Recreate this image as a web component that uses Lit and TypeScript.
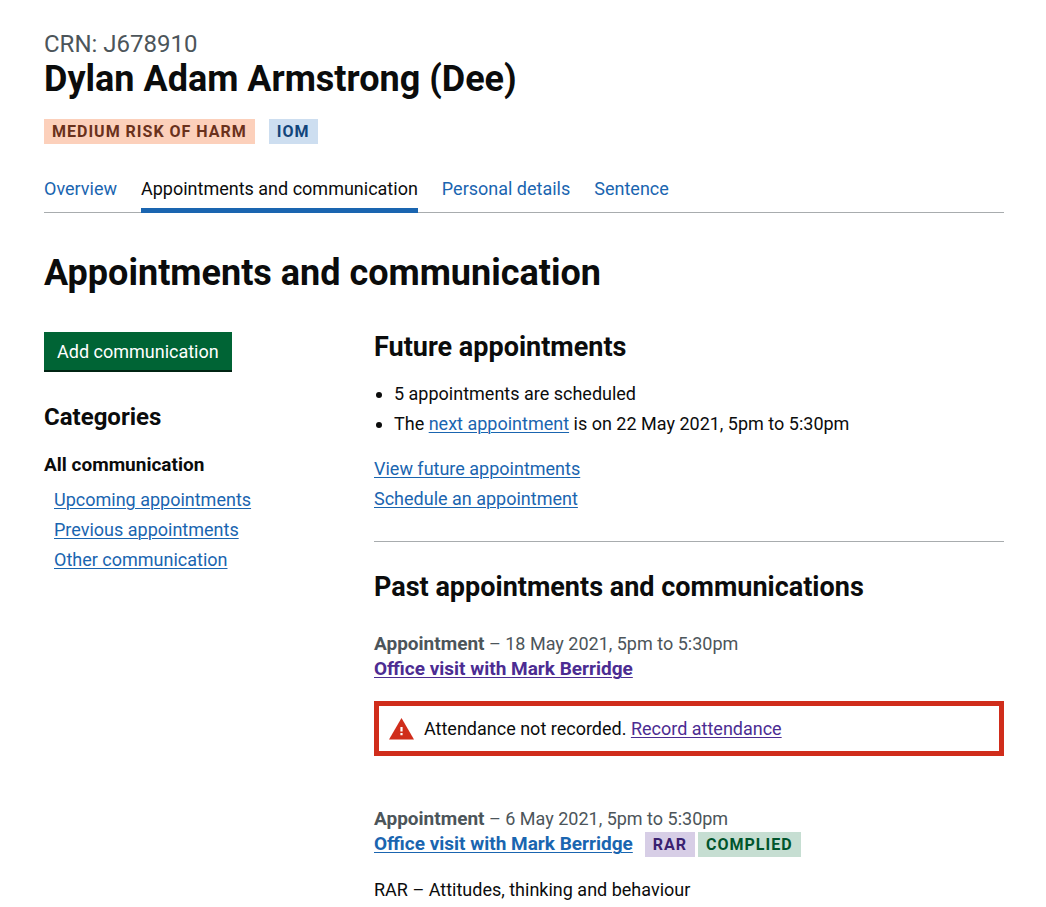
import { LitElement, html, css } from "lit";
import { customElement } from "lit/decorators.js";

@customElement("app-tag")
class AppTag extends LitElement {
  static properties = { colour: { type: String } };
  declare colour: string;

  static styles = css`
    :host { display: inline-block; }
    .tag {
      display: block;
      padding: 0 8px;
      font-size: 16px;
      line-height: 25px;
      font-weight: 700;
      letter-spacing: 1px;
      text-transform: uppercase;
    }
    .orange { background: #fcd0bb; color: #6a311c; }
    .blue { background: #cddef0; color: #12457b; }
    .purple { background: #d7cee6; color: #3a2270; }
    .green { background: #c6ded2; color: #00552c; }
  `;

  render() {
    return html`<strong class="tag ${this.colour}"><slot></slot></strong>`;
  }
}

@customElement("app-root")
class AppRoot extends LitElement {
  static styles = css`
    :host {
      display: block;
      font-family: Roboto, Arial, sans-serif;
      font-size: 18px;
      line-height: 25px;
      color: #0b0c0c;
      background: #fff;
    }
    * { box-sizing: border-box; }
    h1, h2, h3, p, ul { margin: 0; padding: 0; }
    ul { list-style: none; }
    a { color: #1a65b0; text-decoration-thickness: 1px; text-underline-offset: 2px; }
    .page { padding: 29px 42px 0 44px; }
    .crn { font-size: 24px; line-height: 30px; color: #4c555a; }
    .xl { font-size: 36px; line-height: 40px; }
    .tags { display: flex; gap: 14px; margin: 20px 0 32px; }
    .tabs { display: flex; gap: 24px; box-shadow: inset 0 -1px #a8acae; }
    .tab { display: block; padding-bottom: 7px; border-bottom: 5px solid transparent; text-decoration: none; }
    .tab.active { color: #0b0c0c; border-color: #1a65b0; }
    .title { margin: 40px 0 39px; }
    .columns { display: grid; grid-template-columns: 10fr 21fr; gap: 30px; align-items: start; }
    .button {
      display: block;
      padding: 7px 13px 6px;
      margin: 0 0 32px;
      border: 0;
      background: #006435;
      box-shadow: 0 2px #002413;
      color: #fff;
      font: inherit;
      cursor: pointer;
    }
    .medium { font-size: 24px; line-height: 30px; }
    .large { font-size: 27px; line-height: 30px; }
    .bold { font-size: 19px; font-weight: 700; }
    .current { margin-top: 20px; }
    .stack { display: grid; gap: 5px; justify-items: start; }
    .filters { margin-top: 10px; padding-left: 10px; }
    .bullets { list-style: disc; padding-left: 20px; margin: 19px 0 20px; }
    .bullets li + li { margin-top: 5px; }
    .past { margin-top: 30px; padding-top: 30px; border-top: 1px solid #a8acae; }
    .entry { margin-top: 29px; }
    .entry + .entry { margin-top: 50px; }
    .caption { color: #4c555a; }
    .heading { display: flex; flex-wrap: wrap; column-gap: 12px; }
    .labels { display: flex; gap: 3px; padding-top: 1px; }
    .visited { color: #4c2c92; }
    .alert {
      display: flex;
      align-items: center;
      gap: 10px;
      margin-top: 20px;
      padding: 10px;
      border: 5px solid #d02d1b;
    }
    .icon { flex: none; width: 25px; height: 22px; }
    .note { margin-top: 20px; }
  `;

  render() {
    return html`
      <div class="page">
        <header>
          <p class="crn">CRN: J678910</p>
          <h1 class="xl">Dylan Adam Armstrong (Dee)</h1>
          <div class="tags">
            <app-tag colour="orange">Medium risk of harm</app-tag>
            <app-tag colour="blue">IOM</app-tag>
          </div>
          <nav class="tabs" aria-label="Case">
            <a class="tab" href="#overview">Overview</a>
            <a class="tab active" href="#appointments" aria-current="page">Appointments and communication</a>
            <a class="tab" href="#personal">Personal details</a>
            <a class="tab" href="#sentence">Sentence</a>
          </nav>
        </header>
        <main>
          <h2 class="xl title">Appointments and communication</h2>
          <div class="columns">
            <div>
              <button class="button" type="button">Add communication</button>
              <h3 class="medium">Categories</h3>
              <p class="bold current">All communication</p>
              <ul class="stack filters">
                <li><a href="#upcoming">Upcoming appointments</a></li>
                <li><a href="#previous">Previous appointments</a></li>
                <li><a href="#other">Other communication</a></li>
              </ul>
            </div>
            <div>
              <section>
                <h3 class="large">Future appointments</h3>
                <ul class="bullets">
                  <li>5 appointments are scheduled</li>
                  <li>The <a href="#next">next appointment</a> is on 22 May 2021, 5pm to 5:30pm</li>
                </ul>
                <div class="stack">
                  <a href="#future">View future appointments</a>
                  <a href="#schedule">Schedule an appointment</a>
                </div>
              </section>
              <section class="past">
                <h3 class="large">Past appointments and communications</h3>
                <article class="entry">
                  <p class="caption"><span class="bold">Appointment</span> – 18 May 2021, 5pm to 5:30pm</p>
                  <p class="heading"><a class="bold visited" href="#visit-18-may">Office visit with Mark Berridge</a></p>
                  <div class="alert">
                    <svg class="icon" viewBox="0 0 25 22" aria-hidden="true">
                      <path fill="#d02d1b" d="M12.5 0 25 21.5H0Z" />
                      <path fill="#fff" d="M11.4 9h2.2v4.5h-2.2zM11.4 15h2.2v2.3h-2.2z" />
                    </svg>
                    <p>Attendance not recorded. <a class="visited" href="#record">Record attendance</a></p>
                  </div>
                </article>
                <article class="entry">
                  <p class="caption"><span class="bold">Appointment</span> – 6 May 2021, 5pm to 5:30pm</p>
                  <div class="heading">
                    <a class="bold" href="#visit-6-may">Office visit with Mark Berridge</a>
                    <span class="labels">
                      <app-tag colour="purple">RAR</app-tag>
                      <app-tag colour="green">Complied</app-tag>
                    </span>
                  </div>
                  <p class="note">RAR – Attitudes, thinking and behaviour</p>
                </article>
              </section>
            </div>
          </div>
        </main>
      </div>
    `;
  }
}
